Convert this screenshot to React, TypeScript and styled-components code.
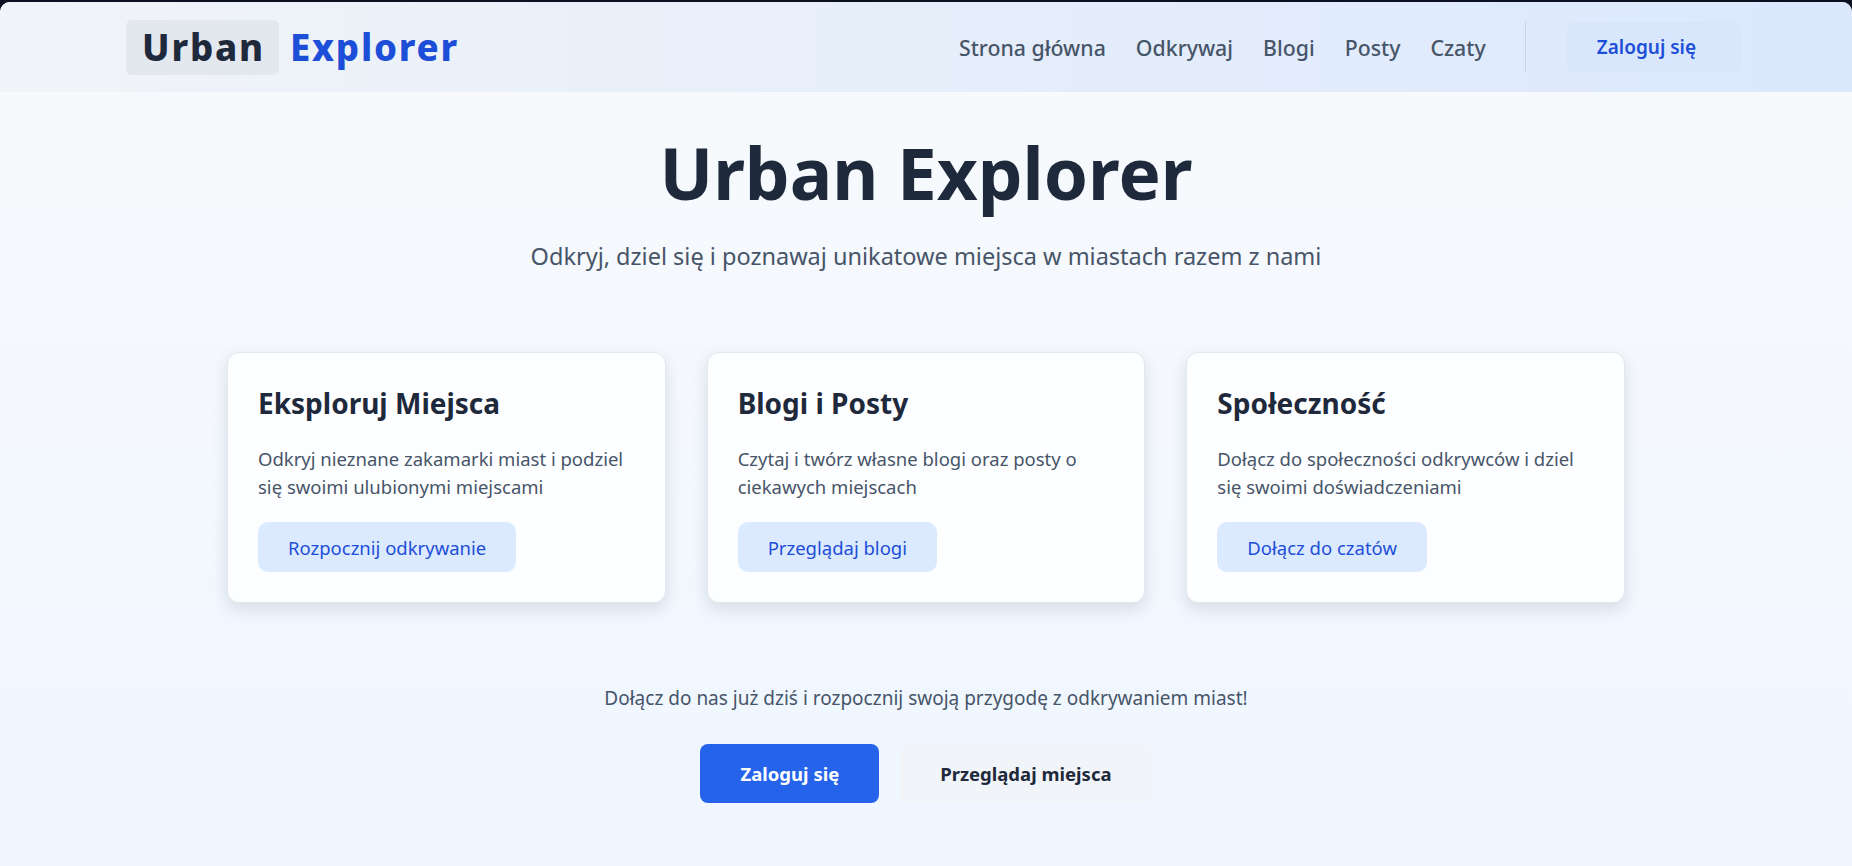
import React from 'react';
import styled, { createGlobalStyle } from 'styled-components';

const GlobalStyle = createGlobalStyle`
  html, body {
    margin: 0;
    padding: 0;
    background: #0b1120;
  }
  * {
    box-sizing: border-box;
  }
  body {
    font-family: 'Noto Sans', 'Open Sans', sans-serif;
  }
`;

const Page = styled.div`
  margin-top: 2px;
  min-height: calc(100vh - 2px);
  border-radius: 10px 10px 0 0;
  overflow: hidden;
  background: linear-gradient(to bottom, #f8fafc 0%, #eff6ff 100%);
`;

const Header = styled.header`
  height: 90px;
  padding: 0 110px 0 126px;
  display: flex;
  align-items: center;
  justify-content: space-between;
  background: linear-gradient(to right, #f1f4f8 0%, #dbe8fd 100%);
`;

const Logo = styled.a`
  display: flex;
  align-items: center;
  font-size: 36.5px;
  font-weight: 800;
  letter-spacing: 0.05em;
  text-decoration: none;
`;

const LogoBox = styled.span`
  background: #e3e7ee;
  color: #1e293b;
  border-radius: 6px;
  padding: 6px 14px 6px 16px;
  line-height: 43px;
`;

const LogoAccent = styled.span`
  color: #1d4ed8;
  margin-left: 11px;
`;

const Nav = styled.nav`
  display: flex;
  align-items: center;
`;

const NavLinks = styled.div`
  display: flex;
  align-items: center;
  gap: 30px;
`;

const NavLink = styled.a`
  font-size: 21.3px;
  font-weight: 500;
  color: #475569;
  text-decoration: none;
`;

const Divider = styled.div`
  width: 1px;
  height: 50px;
  background: #cbd5e1;
  margin: 0 41px 0 39px;
`;

const LoginButton = styled.button`
  height: 50px;
  padding: 0 46px 0 30px;
  border: none;
  border-radius: 8px;
  background: #d9e7fc;
  color: #1d4ed8;
  font-family: inherit;
  font-size: 19px;
  font-weight: 600;
`;

const Main = styled.main`
  display: flex;
  flex-direction: column;
  align-items: center;
  padding-top: 38px;
`;

const HeroTitle = styled.h1`
  margin: 0;
  font-size: 71px;
  font-weight: 700;
  line-height: 1.2;
  color: #1e293b;
`;

const HeroSubtitle = styled.p`
  margin: 25px 0 0;
  font-size: 23.5px;
  line-height: 32px;
  color: #475569;
`;

const CardGrid = styled.section`
  width: 1398px;
  margin-top: 80px;
  display: grid;
  grid-template-columns: repeat(3, 1fr);
  gap: 41px;
`;

const Card = styled.div`
  background: #fdfeff;
  border: 1px solid #e2e8f0;
  border-radius: 12px;
  padding: 30px 30px 30px;
  box-shadow: 0 6px 16px rgba(15, 23, 42, 0.12);
`;

const CardTitle = styled.h2`
  margin: 0;
  font-size: 28px;
  font-weight: 700;
  line-height: 40px;
  color: #1e293b;
`;

const CardText = styled.p`
  margin: 22px 0 0;
  font-size: 18.5px;
  line-height: 28px;
  color: #475569;
`;

const CardButton = styled.button`
  margin-top: 21px;
  height: 50px;
  padding: 0 30px;
  border: none;
  border-radius: 10px;
  background: #dbeafe;
  color: #1d4ed8;
  font-family: inherit;
  font-size: 18.5px;
`;

const Cta = styled.section`
  margin-top: 81px;
  display: flex;
  flex-direction: column;
  align-items: center;
`;

const CtaText = styled.p`
  margin: 0;
  font-size: 19px;
  line-height: 28px;
  color: #475569;
`;

const CtaButtons = styled.div`
  margin-top: 32px;
  display: flex;
  gap: 21px;
`;

const CtaButton = styled.button<{ $primary?: boolean }>`
  height: 59px;
  padding: 0 40px;
  border: none;
  border-radius: 8px;
  font-family: inherit;
  font-size: 18.5px;
  font-weight: 700;
  background: ${(p) => (p.$primary ? '#2563eb' : '#f1f5f9')};
  color: ${(p) => (p.$primary ? '#ffffff' : '#1e293b')};
`;

const cards = [
  {
    title: 'Eksploruj Miejsca',
    text: 'Odkryj nieznane zakamarki miast i podziel się swoimi ulubionymi miejscami',
    action: 'Rozpocznij odkrywanie',
  },
  {
    title: 'Blogi i Posty',
    text: 'Czytaj i twórz własne blogi oraz posty o ciekawych miejscach',
    action: 'Przeglądaj blogi',
  },
  {
    title: 'Społeczność',
    text: 'Dołącz do społeczności odkrywców i dziel się swoimi doświadczeniami',
    action: 'Dołącz do czatów',
  },
];

const navItems = ['Strona główna', 'Odkrywaj', 'Blogi', 'Posty', 'Czaty'];

export default function App() {
  return (
    <>
      <GlobalStyle />
      <Page>
        <Header>
          <Logo href="#">
            <LogoBox>Urban</LogoBox>
            <LogoAccent>Explorer</LogoAccent>
          </Logo>
          <Nav>
            <NavLinks>
              {navItems.map((item) => (
                <NavLink key={item} href="#">
                  {item}
                </NavLink>
              ))}
            </NavLinks>
            <Divider />
            <LoginButton>Zaloguj się</LoginButton>
          </Nav>
        </Header>

        <Main>
          <HeroTitle>Urban Explorer</HeroTitle>
          <HeroSubtitle>
            Odkryj, dziel się i poznawaj unikatowe miejsca w miastach razem z nami
          </HeroSubtitle>

          <CardGrid>
            {cards.map((card) => (
              <Card key={card.title}>
                <CardTitle>{card.title}</CardTitle>
                <CardText>{card.text}</CardText>
                <CardButton>{card.action}</CardButton>
              </Card>
            ))}
          </CardGrid>

          <Cta>
            <CtaText>
              Dołącz do nas już dziś i rozpocznij swoją przygodę z odkrywaniem miast!
            </CtaText>
            <CtaButtons>
              <CtaButton $primary>Zaloguj się</CtaButton>
              <CtaButton>Przeglądaj miejsca</CtaButton>
            </CtaButtons>
          </Cta>
        </Main>
      </Page>
    </>
  );
}
